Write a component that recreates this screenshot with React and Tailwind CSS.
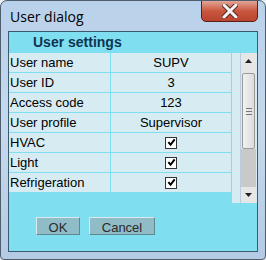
const rows = [
  { label: "User name", value: "SUPV" },
  { label: "User ID", value: "3" },
  { label: "Access code", value: "123" },
  { label: "User profile", value: "Supervisor" },
  { label: "HVAC", check: true },
  { label: "Light", check: true },
  { label: "Refrigeration", check: true },
];

const Check = () => (
  <span className="w-[12px] h-[12px] bg-white border border-[#333] flex items-center justify-center">
    <svg width="9" height="9" viewBox="0 0 10 10">
      <path d="M1.5 4.5 L4 7.5 L8.5 1.5" stroke="#000" strokeWidth="2.2" fill="none" />
    </svg>
  </span>
);

const Scrollbar = () => (
  <div className="w-[16px] h-full flex flex-col bg-[#e6e6e6] border-l border-[#bcd]">
    <div className="h-[16px] flex items-center justify-center">
      <svg width="7" height="4" viewBox="0 0 7 4"><path d="M0 4 L3.5 0 L7 4Z" fill="#222" /></svg>
    </div>
    <div className="mx-[1px] mt-[4px] h-[76px] rounded-[2px] border border-[#9a9a9a] bg-gradient-to-r from-[#f2f2f2] to-[#dcdcdc] flex flex-col items-center justify-center gap-[2px]">
      <span className="w-[6px] h-[1px] bg-[#777]" />
      <span className="w-[6px] h-[1px] bg-[#777]" />
      <span className="w-[6px] h-[1px] bg-[#777]" />
    </div>
    <div className="flex-1 bg-[#c9c9c9]" />
    <div className="h-[16px] flex items-center justify-center">
      <svg width="7" height="4" viewBox="0 0 7 4"><path d="M0 0 L7 0 L3.5 4Z" fill="#222" /></svg>
    </div>
  </div>
);

export default function App() {
  return (
    <div className="w-[266px] h-[260px] bg-[#e9eef4]">
      <div className="w-[266px] h-[260px] flex flex-col rounded-t-[7px] rounded-b-[4px] border border-[#4f5d6c] bg-gradient-to-b from-[#b9d1ea] via-[#c6d9ee] to-[#b3cbe3] overflow-hidden">
        <div className="h-[30px] flex items-start justify-between pl-[9px]">
          <span className="mt-[6px] text-[14px] leading-[20px] text-black" style={{ fontFamily: '"Open Sans", sans-serif' }}>
            User dialog
          </span>
          <div className="mr-[7px] mt-[-1px] w-[57px] h-[22px] rounded-b-[5px] border border-[#5a2118] bg-gradient-to-b from-[#e2a596] via-[#c9563f] to-[#b9442f] flex items-center justify-center">
            <svg width="16" height="14" viewBox="0 0 16 14">
              <path d="M2 1 L14 13 M14 1 L2 13" stroke="#5a2a24" strokeWidth="5" strokeLinecap="round" />
              <path d="M2 1 L14 13 M14 1 L2 13" stroke="#f4f4f4" strokeWidth="3" strokeLinecap="round" />
            </svg>
          </div>
        </div>
        <div
          className="mx-[7px] mb-[7px] flex-1 flex flex-col border border-[#3a5a70] bg-[#80def1] text-[13px] text-black"
          style={{ fontFamily: '"Liberation Sans", Arial, sans-serif' }}
        >
          <div className="h-[21px] flex items-center pl-[24px] text-[14px] font-bold text-[#0e3550]">User settings</div>
          <div className="flex h-[150px]">
            <div className="w-[223px] flex flex-col">
              {rows.map((r) => (
                <div key={r.label} className="h-[20px] flex bg-[#d7ecf2] border-b border-[#80def1]">
                  <div className="w-[102px] pl-[1px] flex items-center border-r border-[#80def1]">{r.label}</div>
                  <div className="flex-1 flex items-center justify-center border-r border-[#80def1]">
                    {r.check ? <Check /> : r.value}
                  </div>
                </div>
              ))}
            </div>
            <div className="flex-1 flex bg-[#d7ecf2]">
              <div className="w-[8px]" />
              <Scrollbar />
            </div>
          </div>
          <div className="flex gap-[9px] pl-[27px] mt-[14px]">
            <button className="w-[44px] h-[18px] bg-[#8fbcc6] border border-t-[#d8ecf0] border-l-[#d8ecf0] border-b-[#5f8890] border-r-[#5f8890] text-[#2a2a2a]">
              OK
            </button>
            <button className="w-[66px] h-[18px] bg-[#8fbcc6] border border-t-[#d8ecf0] border-l-[#d8ecf0] border-b-[#5f8890] border-r-[#5f8890] text-[#2a2a2a]">
              Cancel
            </button>
          </div>
        </div>
      </div>
    </div>
  );
}
